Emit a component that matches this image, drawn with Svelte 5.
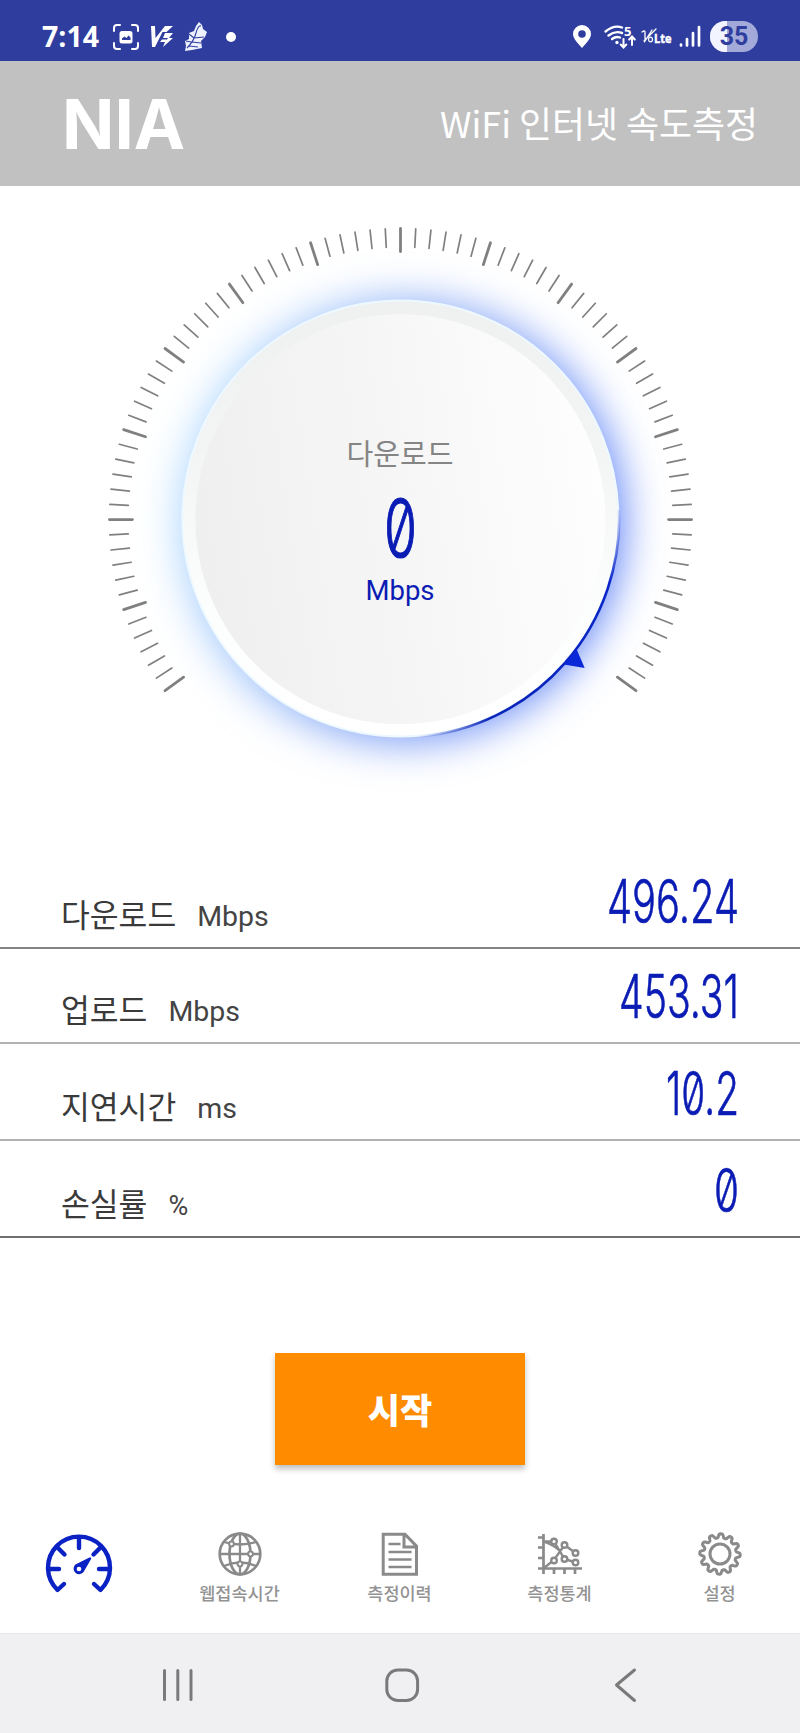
<script lang="ts">
  interface Result {
    label: string;
    unit: string;
    value: string;
    width: number;
    height: number;
    line: string;
  }

  const results: Result[] = [
    { label: '다운로드', unit: 'Mbps', value: '496.24', width: 132, height: 97, line: '#858585' },
    { label: '업로드', unit: 'Mbps', value: '453.31', width: 120, height: 95, line: '#b2b2b2' },
    { label: '지연시간', unit: 'ms', value: '10.2', width: 73, height: 97, line: '#b2b2b2' },
    { label: '손실률', unit: '%', value: '0', width: 25, height: 97, line: '#707070' },
  ];

  const tabs = [
    { id: 'speed', label: '' },
    { id: 'web', label: '웹접속시간' },
    { id: 'history', label: '측정이력' },
    { id: 'stats', label: '측정통계' },
    { id: 'settings', label: '설정' },
  ];

  // dial scale: one tick every 3 degrees, a bold one every 18
  const ticks = Array.from({ length: 85 }, (_, i) => ({
    angle: -126 + i * 3,
    major: i % 6 === 0,
  }));

  // gear outline with 12 rounded teeth
  const gear = Array.from({ length: 145 }, (_, i) => {
    const a = (i / 144) * Math.PI * 2;
    const r = 18.2 + 2.1 * Math.tanh(2 * Math.cos(12 * a - 0.6));
    return `${i ? 'L' : 'M'}${(22 + r * Math.sin(a)).toFixed(2)} ${(22 - r * Math.cos(a)).toFixed(2)}`;
  }).join('') + 'Z';
</script>

<div class="screen">
  <div class="status">
    <svg class="clock" width="57" height="40" viewBox="0 0 57 40">
      <text x="0" y="30" textLength="57" lengthAdjust="spacingAndGlyphs">7:14</text>
    </svg>
    <svg class="capture" width="26" height="26" viewBox="0 0 26 26" fill="none" stroke="#fff" stroke-width="2" stroke-linecap="round">
      <path d="M1 7V4q0-3 3-3h3M19 1h3q3 0 3 3v3M25 19v3q0 3-3 3h-3M7 25H4q-3 0-3-3v-3" />
      <rect x="6.500" y="7" width="13" height="12.500" rx="2.500" fill="#fff" stroke="none" />
      <path d="M9 16v-1.500l2.500-2 2 1.500 2-2.500 2 2V16z" fill="#2f3d9f" stroke="none" />
    </svg>
    <svg class="v3" width="23" height="23" viewBox="0 0 23 23" fill="#fff">
      <path d="M0 1h4l.5 12L14 1h8l-6.500 6h-4L4 22H1z" />
      <path d="M14 8h8l-4 5h4L12 22l2-5H9l2-2.500h5l1-1.500h-5z" />
    </svg>
    <svg class="feather" width="24" height="31" viewBox="0 0 24 31">
      <path d="M15 1l3 3 1 4 4 3-2 5-4 4 1 7-5 1-5 1-7 1 1-5-1-5 4-2V12l5-2 2-5z" fill="#eef2ff" />
      <path d="M3 27Q10 20 12 12t5-7M10 17l-5-4M10 17l10-1M7 21l-5-1M8 21l9 1M5 25l9 1" fill="none" stroke="#2f3d9f" stroke-width="1.100" />
    </svg>
    <span class="dot"></span>

    <svg class="pin" width="18" height="23" viewBox="0 0 18 23">
      <path d="M9 0a9 9 0 0 0-9 9c0 5 5 9 9 14 4-5 9-9 9-14a9 9 0 0 0-9-9z" fill="#fff" />
      <circle cx="9" cy="9" r="3.800" fill="#2f3d9f" />
    </svg>
    <svg class="wifi" width="32" height="26" viewBox="0 0 32 26" fill="none" stroke="#fff" stroke-width="2.400" stroke-linecap="round">
      <path d="M1.500 7.500Q10 .5 18 3.500M4.500 11.500Q11 6.500 18 9M8 15q4-3 8-1.500" />
      <circle cx="13" cy="18.500" r="1.700" fill="#fff" stroke="none" />
      <path d="M19.500 15v8M16.700 20.500l2.800 3 2.800-3M28 21v-8M25.200 15.500l2.800-3 2.800 3" stroke-width="2" />
      <text x="20" y="11.500" class="wifi-gen">5</text>
    </svg>
    <svg class="volte" width="31" height="18" viewBox="0 0 31 18">
      <path d="M1 4q3-2 3 0v9L11 2M3 13L15 1" fill="none" stroke="#fff" stroke-width="1.300" stroke-linecap="round" />
      <ellipse cx="9.500" cy="11.500" rx="2" ry="2.300" fill="none" stroke="#fff" stroke-width="1.200" />
      <text x="13" y="15" textLength="17.500" lengthAdjust="spacingAndGlyphs">Lte</text>
    </svg>
    <svg class="signal" width="22" height="23" viewBox="0 0 22 23" stroke="#fff" stroke-width="2.700" stroke-linecap="round">
      <path d="M2 19.500v1M8 14v6.500M14 8v12.500M20 2v18.500" />
    </svg>
    <span class="battery"><span class="charge"></span><span class="percent">35</span></span>
  </div>

  <header>
    <svg class="logo" width="118" height="90" viewBox="0 0 118 90">
      <text x="-4" y="70" textLength="123" lengthAdjust="spacingAndGlyphs">NIA</text>
    </svg>
    <svg class="title" width="320" height="60" viewBox="0 0 320 60">
      <text x="3" y="43.500" textLength="318" lengthAdjust="spacingAndGlyphs">WiFi 인터넷 속도측정</text>
    </svg>
  </header>

  <svg class="gauge" width="800" height="666" viewBox="0 186 800 666">
    <defs>
      <linearGradient id="glow" x1="0" y1=".35" x2="1" y2=".6">
        <stop offset="0" stop-color="#b4deff" />
        <stop offset=".5" stop-color="#85a6f5" />
        <stop offset="1" stop-color="#567bf7" />
      </linearGradient>
      <linearGradient id="rim" x1="0" y1="0" x2="0" y2="1">
        <stop offset="0" stop-color="#eff1f1" />
        <stop offset=".35" stop-color="#f3f5f5" />
        <stop offset=".7" stop-color="#fcfdfd" />
        <stop offset="1" stop-color="#fff" />
      </linearGradient>
      <linearGradient id="face" x1="0" y1=".55" x2="1" y2=".4">
        <stop offset="0" stop-color="#efefef" />
        <stop offset=".5" stop-color="#f6f6f6" />
        <stop offset="1" stop-color="#fefefe" />
      </linearGradient>
      <linearGradient id="arc" gradientUnits="userSpaceOnUse" x1="619" y1="510" x2="420" y2="738">
        <stop offset="0" stop-color="#0a25c8" stop-opacity=".1" />
        <stop offset=".2" stop-color="#0a25c8" />
        <stop offset=".8" stop-color="#0a25b8" />
        <stop offset="1" stop-color="#0a25b8" stop-opacity="0" />
      </linearGradient>
      <filter id="soft" x="-30%" y="-30%" width="160%" height="160%">
        <feGaussianBlur stdDeviation="20" />
      </filter>
    </defs>

    {#each ticks as t}
      <line
        x1="400.500" y1="228.500" x2="400.500" y2={t.major ? 251.500 : 247}
        class={t.major ? 'major' : 'minor'}
        transform="rotate({t.angle} 400.5 519.6)"
      />
    {/each}

    <circle cx="401" cy="521" r="222" fill="url(#glow)" filter="url(#soft)" />
    <circle cx="400.400" cy="518.500" r="218" fill="url(#rim)" stroke="#eef8ff" stroke-width="2" />
    <circle cx="400.400" cy="519.300" r="205" fill="url(#face)" />
    <path d="M619 510A218.500 218.500 0 0 1 420 736.500" fill="none" stroke="url(#arc)" stroke-width="2.600" />
    <path d="M576.500 649L564 664.500l20.700 3.500z" fill="#0a28d8" />

    <text class="g-label" x="400" y="464.500" textLength="107" lengthAdjust="spacingAndGlyphs">다운로드</text>
    <text class="g-value" x="384" y="557" textLength="33" lengthAdjust="spacingAndGlyphs">0</text>
    <text class="g-unit" x="400" y="600">Mbps</text>
  </svg>

  <div class="results">
    {#each results as r}
      <div class="row" style="height: {r.height}px; border-color: {r.line}">
        <span class="label">{r.label}</span>
        <span class="unit" class:small={r.unit === '%'}>{r.unit}</span>
        <svg class="value" width={r.width} height="76" viewBox="0 0 {r.width} 76">
          <text x="0" y="60" textLength={r.width} lengthAdjust="spacingAndGlyphs">{r.value}</text>
        </svg>
      </div>
    {/each}
  </div>

  <button class="start">시작</button>

  <nav class="tabs">
    {#each tabs as tab}
      <div class="tab {tab.id}">
        {#if tab.id === 'speed'}
          <svg width="68" height="60" viewBox="0 0 68 60" fill="none" stroke="#0a22c4" stroke-width="4.400" stroke-linecap="round" stroke-linejoin="round">
            <path d="M19 50l-6.500 6A31 31 0 1 1 55.500 56L49 50" />
            <path d="M34 4v10M3 35h11M54 35h11M12.500 13.500l7 7M55.500 13.500l-7 7" />
            <path d="M45 24.500L31 31.500a4.300 4.300 0 1 0 6.500 6z" fill="#0a22c4" stroke-width="2.500" />
            <circle cx="34" cy="35" r="2.300" fill="#fff" stroke="none" />
          </svg>
        {:else if tab.id === 'web'}
          <svg width="44" height="44" viewBox="0 0 44 44" fill="none" stroke="#8a8a8a" stroke-width="2.700">
            <circle cx="22" cy="22" r="20.300" />
            <ellipse cx="22" cy="22" rx="10.500" ry="20.300" />
            <path d="M22 2v40M2 22h40M6 10q16 5 32 0M6 34q16-7 32 0" stroke-width="2.300" />
            <circle cx="13.500" cy="12" r="2.400" fill="#fff" stroke-width="2" />
            <circle cx="32.500" cy="22" r="2.400" fill="#fff" stroke-width="2" />
            <circle cx="22" cy="32" r="2.400" fill="#fff" stroke-width="2" />
          </svg>
        {:else if tab.id === 'history'}
          <svg width="44" height="44" viewBox="0 0 44 44" fill="none" stroke="#8a8a8a" stroke-width="3">
            <path d="M5.200 2.200H27l11.500 12v28H5.200zM26 2v13h12.500" />
            <path d="M10.500 12h12M10.500 20h23M10.500 27.500h23M10.500 35h23" stroke-width="2.500" />
          </svg>
        {:else if tab.id === 'stats'}
          <svg width="46" height="44" viewBox="0 0 46 44" fill="none" stroke="#8a8a8a" stroke-width="2.700">
            <path d="M6.500 2v40M1 36.500h44M1 5.500h6M1 15.500h6M1 26h6M17 36v6M27.500 36v6M38 36v6" />
            <path d="M7 9.500h10L27.500 27l11 3.500M7 36l10-8 10.500-15 11 8M8 10q10 4 15 9" stroke-width="2.400" />
            <g fill="#fff" stroke-width="2.400">
              <circle cx="17" cy="9.500" r="2.800" /><circle cx="27.500" cy="13" r="2.800" />
              <circle cx="38.500" cy="21" r="2.800" /><circle cx="17" cy="28.500" r="2.800" />
              <circle cx="27.500" cy="27" r="2.800" /><circle cx="38.500" cy="30.500" r="2.800" />
            </g>
          </svg>
        {:else}
          <svg width="44" height="44" viewBox="0 0 44 44" fill="none" stroke="#8a8a8a" stroke-width="3" stroke-linejoin="round">
            <path d={gear} />
            <circle cx="22" cy="22" r="10" />
          </svg>
        {/if}
        {#if tab.label}<span>{tab.label}</span>{/if}
      </div>
    {/each}
  </nav>

  <div class="system-nav">
    <svg width="34" height="34" viewBox="0 0 34 34">
      <path d="M3.500 2.500v29M16.800 2.500v29M30 2.500v29" />
    </svg>
    <svg width="34" height="34" viewBox="0 0 34 34">
      <rect x="1.800" y="2" width="30.800" height="30.500" rx="11" />
    </svg>
    <svg width="34" height="34" viewBox="0 0 34 34">
      <path d="M26.500 2L8.500 17l18 15.500" />
    </svg>
  </div>
</div>

<style>
  :global(body) {
    margin: 0;
    background: #fff;
  }

  .screen {
    width: 800px;
    height: 1733px;
    display: flex;
    flex-direction: column;
    background: #fff;
    font-family: Roboto, 'Noto Sans CJK KR', sans-serif;
    overflow: hidden;
  }

  svg {
    display: block;
    flex: none;
    overflow: visible;
  }

  /* Status bar */
  .status {
    box-sizing: border-box;
    height: 61px;
    padding: 12px 42px 0;
    display: flex;
    align-items: center;
    background: #2f3d9f;
  }

  .clock text {
    font: 700 28px 'Open Sans', sans-serif;
    fill: #fff;
  }

  .capture { margin-left: 14px; }
  .v3 { margin-left: 12px; }
  .feather { margin-left: 10px; }

  .dot {
    width: 10px;
    height: 10px;
    margin-left: 18px;
    border-radius: 50%;
    background: #fff;
  }

  .pin { margin-left: auto; }
  .wifi { margin-left: 13px; }

  .wifi-gen {
    font: 700 13px 'Open Sans', sans-serif;
    fill: #fff;
    stroke: none;
  }

  .volte { margin-left: 5px; }

  .volte text {
    font: 700 13px 'Open Sans', sans-serif;
    fill: #fff;
    stroke: #fff;
    stroke-width: 0.5px;
  }

  .signal { margin-left: 7px; }

  .battery {
    position: relative;
    width: 48px;
    height: 31px;
    margin-left: 9px;
    border-radius: 16px;
    background: #a3a9d8;
    overflow: hidden;
  }

  .charge {
    position: absolute;
    inset: 0 auto 0 0;
    width: 35%;
    background: #f2f5ff;
  }

  .percent {
    position: absolute;
    inset: 0;
    font: 700 25px/31px Roboto, sans-serif;
    text-align: center;
    color: #2f3d9f;
  }

  /* App header */
  header {
    box-sizing: border-box;
    height: 125px;
    padding: 0 43px 0 66px;
    display: flex;
    align-items: center;
    justify-content: space-between;
    background: #c1c1c1;
  }

  .logo text {
    font: 750 69px Inter, sans-serif;
    fill: #fff;
  }

  .title text {
    font: 400 36px 'Noto Sans CJK KR', sans-serif;
    fill: #fff;
  }

  /* Speed dial */
  .major,
  .minor {
    stroke: #808080;
    stroke-linecap: round;
    stroke-width: 1.700px;
  }

  .major {
    stroke-width: 2.800px;
  }

  .g-label,
  .g-unit {
    text-anchor: middle;
  }

  .g-label {
    font: 400 29px 'Noto Sans CJK KR', sans-serif;
    fill: #858585;
  }

  .g-value {
    font: 300 80px Inter, sans-serif;
    font-feature-settings: 'zero';
    fill: #0a1cb4;
    stroke: #0a1cb4;
    stroke-width: 1.200px;
  }

  .g-unit {
    font: 400 27.500px Roboto, sans-serif;
    fill: #0a1cb4;
  }

  /* Results */
  .row {
    box-sizing: border-box;
    display: flex;
    align-items: flex-end;
    padding: 0 61px 0 61px;
    border-bottom: 2px solid;
  }

  .label {
    font: 400 31.300px/40px 'Noto Sans CJK KR', sans-serif;
    color: #3a3a3a;
    margin-bottom: 13px;
  }

  .unit {
    margin: 0 0 10px 21px;
    font: 400 28.500px/40px Roboto, sans-serif;
    color: #444;
  }

  .unit.small {
    font-size: 27px;
  }

  .value {
    margin: 0 0 8px auto;
  }

  .value text {
    font: 300 60px Inter, sans-serif;
    font-feature-settings: 'zero';
    fill: #0a1cb4;
    stroke: #0a1cb4;
    stroke-width: 0.700px;
  }

  /* Start button */
  .start {
    align-self: center;
    width: 250px;
    height: 112px;
    margin: 115px 0 67px;
    padding: 0 0 2px;
    border: 0;
    background: #ff8c00;
    box-shadow: 0 4px 6px rgba(0, 0, 0, 0.25);
    font: 900 35px 'Noto Sans CJK KR', sans-serif;
    color: #fff;
  }

  /* Bottom tabs */
  .tabs {
    display: grid;
    grid-template-columns: repeat(5, 1fr);
    height: 101px;
  }

  .tab {
    display: flex;
    flex-direction: column;
    align-items: center;
    gap: 5px;
    padding-right: 1px;
  }

  .tab.speed {
    padding: 2px 2px 0 0;
  }

  .tab span {
    font: 500 17.500px/24px 'Noto Sans CJK KR', sans-serif;
    color: #939393;
  }

  /* Android navigation */
  .system-nav {
    flex: 1;
    padding: 2px 158px 0 161px;
    display: flex;
    align-items: center;
    justify-content: space-between;
    background: #f0f0f2;
    border-top: 1px solid #e6e6e8;
  }

  .system-nav svg {
    fill: none;
    stroke: #7a7a7a;
    stroke-width: 3px;
    stroke-linecap: round;
    stroke-linejoin: round;
  }
</style>
